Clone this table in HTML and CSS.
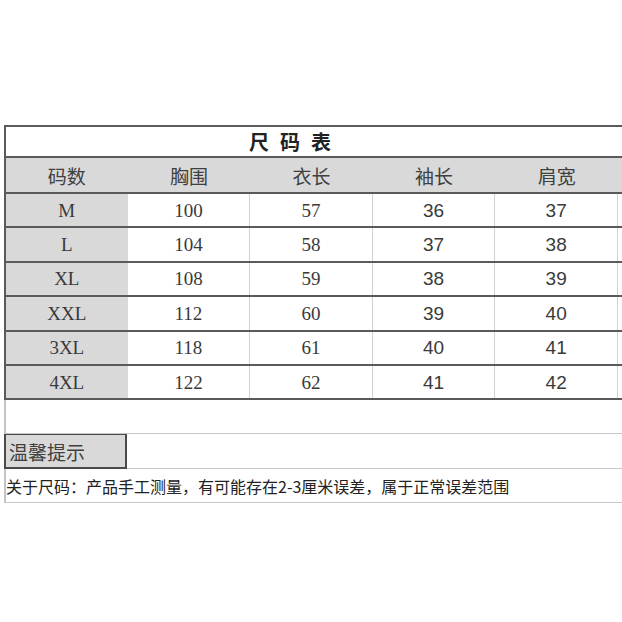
FILE: index.html
```html
<!DOCTYPE html>
<html lang="zh">
<head>
<meta charset="utf-8">
<title>尺码表</title>
<link rel="stylesheet" href="styles.css">
</head>
<body>
<div class="sheet">
  <div class="row title-row"><div class="title">尺码表</div></div>
  <div class="row head-row">
    <div class="cell">码数</div>
    <div class="cell">胸围</div>
    <div class="cell">衣长</div>
    <div class="cell">袖长</div>
    <div class="cell">肩宽</div>
    <div class="cell extra"></div>
  </div>
  <div class="row data-row">
    <div class="cell size">M</div><div class="cell serif">100</div><div class="cell serif">57</div><div class="cell sans">36</div><div class="cell sans">37</div><div class="cell extra"></div>
  </div>
  <div class="row data-row">
    <div class="cell size">L</div><div class="cell serif">104</div><div class="cell serif">58</div><div class="cell sans">37</div><div class="cell sans">38</div><div class="cell extra"></div>
  </div>
  <div class="row data-row">
    <div class="cell size">XL</div><div class="cell serif">108</div><div class="cell serif">59</div><div class="cell sans">38</div><div class="cell sans">39</div><div class="cell extra"></div>
  </div>
  <div class="row data-row">
    <div class="cell size">XXL</div><div class="cell serif">112</div><div class="cell serif">60</div><div class="cell sans">39</div><div class="cell sans">40</div><div class="cell extra"></div>
  </div>
  <div class="row data-row">
    <div class="cell size">3XL</div><div class="cell serif">118</div><div class="cell serif">61</div><div class="cell sans">40</div><div class="cell sans">41</div><div class="cell extra"></div>
  </div>
  <div class="row data-row">
    <div class="cell size">4XL</div><div class="cell serif">122</div><div class="cell serif">62</div><div class="cell sans">41</div><div class="cell sans">42</div><div class="cell extra"></div>
  </div>
  <div class="row blank-row"></div>
  <div class="row tip-row"><div class="tip">温馨提示</div></div>
  <div class="row note-row">关于尺码：产品手工测量，有可能存在2-3厘米误差，属于正常误差范围</div>
</div>
</body>
</html>
```
FILE: styles.css
```css
html, body {
  margin: 0;
  padding: 0;
  background: #ffffff;
  overflow: hidden;
}
body {
  width: 622px;
  height: 622px;
  font-family: "Noto Sans CJK SC", "Liberation Sans", sans-serif;
  color: #333;
}
.sheet {
  margin: 125px 0 0 4px;
  width: 640px;
  border-left: 2px solid #c4c4c4;
}
.row {
  display: flex;
  box-sizing: border-box;
}
.title-row {
  height: 33px;
  border-top: 2px solid #5a5a5a;
  border-bottom: 2px solid #5a5a5a;
  margin-left: -2px;
  border-left: 2px solid #5a5a5a;
  align-items: center;
}
.title {
  padding-left: 243px;
  font-size: 20px;
  font-weight: 700;
  letter-spacing: 11px;
  color: #222;
  line-height: 1;
}
.head-row {
  height: 36px;
  background: #d9d9d9;
  border-bottom: 2px solid #5a5a5a;
  margin-left: -2px;
  border-left: 2px solid #5a5a5a;
}
.head-row .cell {
  font-size: 19px;
  color: #404040;
  border-right: none;
}
.cell {
  width: 122.6px;
  flex: none;
  display: flex;
  align-items: center;
  justify-content: center;
  box-sizing: border-box;
  border-right: 1px solid #d2d2d2;
  line-height: 1;
}
.head-row .cell:first-child {
  width: 121.6px;
}
.data-row {
  height: 34.4px;
  border-bottom: 2px solid #5a5a5a;
  margin-left: -2px;
  border-left: 2px solid #5a5a5a;
}
.data-row .cell:first-child {
  width: 121.6px;
  background: #d9d9d9;
  border-right: none;
}
.cell.extra {
  border-right: none;
  width: 30px;
}
.size, .serif {
  font-family: "Liberation Serif", "Noto Sans CJK SC", serif;
  font-size: 19px;
  color: #3a3a3a;
}
.sans {
  font-family: "Liberation Sans", "Noto Sans CJK SC", sans-serif;
  font-size: 19px;
  color: #3a3a3a;
}
.blank-row {
  height: 34px;
  border-bottom: 1px solid #c8c8c8;
}
.tip-row {
  height: 35px;
  border-bottom: 1px solid #c8c8c8;
}
.tip {
  width: 123px;
  margin-left: -2px;
  margin-bottom: -1px;
  box-sizing: border-box;
  background: #d9d9d9;
  border: 2px solid #4a4a4a;
  border-top: 1px solid #4a4a4a;
  font-size: 19px;
  color: #404040;
  display: flex;
  align-items: center;
  padding-left: 3px;
  line-height: 1;
}
.note-row {
  height: 34px;
  border-bottom: 1px solid #c8c8c8;
  align-items: center;
  font-size: 16px;
  color: #222;
  padding-left: 0px;
  line-height: 1;
}
```
